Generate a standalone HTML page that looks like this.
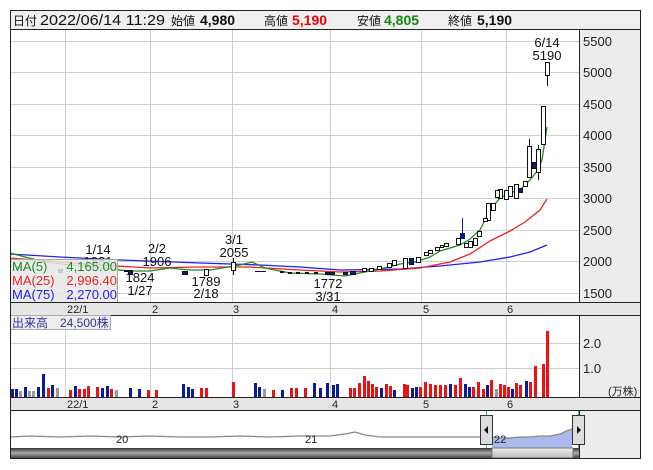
<!DOCTYPE html>
<html><head><meta charset="utf-8"><style>
html,body{margin:0;padding:0;background:#fff;width:653px;height:470px;overflow:hidden}
svg{display:block;font-family:"Liberation Sans","Noto Sans CJK JP",sans-serif}
</style></head><body>
<svg width="653" height="470" viewBox="0 0 653 470" xmlns="http://www.w3.org/2000/svg">
<rect x="10.5" y="10.5" width="630" height="448" fill="#fff" stroke="#222"/>
<rect x="11" y="11" width="629" height="18" fill="#efefef"/>
<line x1="10" y1="29.5" x2="641" y2="29.5" stroke="#222"/>
<g font-size="13" fill="#111">
<text x="13" y="25" font-size="12">日付</text>
<text x="40" y="25" font-size="15" textLength="125" lengthAdjust="spacingAndGlyphs">2022/06/14 11:29</text>
<text x="171" y="25" font-size="12">始値</text>
<text x="200" y="25" font-weight="bold" font-size="14">4,980</text>
<text x="264" y="25" font-size="12">高値</text>
<text x="292" y="25" font-weight="bold" font-size="14" fill="#ee0000">5,190</text>
<text x="357" y="25" font-size="12">安値</text>
<text x="384" y="25" font-weight="bold" font-size="14" fill="#118811">4,805</text>
<text x="448" y="25" font-size="12">終値</text>
<text x="477" y="25" font-weight="bold" font-size="14">5,190</text>
</g>
<rect x="579" y="30" width="61" height="272" fill="#ececec"/>
<rect x="579" y="315" width="61" height="82" fill="#ececec"/>
<line x1="579.5" y1="30" x2="579.5" y2="397" stroke="#222"/>
<g stroke="#cfcfcf" stroke-width="1">
<line x1="11" y1="41.5" x2="579" y2="41.5"/><line x1="11" y1="72.5" x2="579" y2="72.5"/>
<line x1="11" y1="104.5" x2="579" y2="104.5"/><line x1="11" y1="135.5" x2="579" y2="135.5"/>
<line x1="11" y1="167.5" x2="579" y2="167.5"/><line x1="11" y1="198.5" x2="579" y2="198.5"/>
<line x1="11" y1="230.5" x2="579" y2="230.5"/><line x1="11" y1="261.5" x2="579" y2="261.5"/>
<line x1="11" y1="293.5" x2="579" y2="293.5"/>
<line x1="65.5" y1="30" x2="65.5" y2="302"/><line x1="150.5" y1="30" x2="150.5" y2="302"/>
<line x1="232.5" y1="30" x2="232.5" y2="302"/><line x1="330.5" y1="30" x2="330.5" y2="302"/>
<line x1="421.5" y1="30" x2="421.5" y2="302"/><line x1="506.5" y1="30" x2="506.5" y2="302"/>
<line x1="11" y1="343.5" x2="579" y2="343.5"/><line x1="11" y1="368.5" x2="579" y2="368.5"/>
<line x1="65.5" y1="315" x2="65.5" y2="397"/><line x1="150.5" y1="315" x2="150.5" y2="397"/>
<line x1="232.5" y1="315" x2="232.5" y2="397"/><line x1="330.5" y1="315" x2="330.5" y2="397"/>
<line x1="421.5" y1="315" x2="421.5" y2="397"/><line x1="506.5" y1="315" x2="506.5" y2="397"/>
</g>
<g font-size="13" fill="#222">
<text x="583" y="46">5500</text><text x="583" y="77">5000</text><text x="583" y="109">4500</text>
<text x="583" y="140">4000</text><text x="583" y="172">3500</text><text x="583" y="203">3000</text>
<text x="583" y="235">2500</text><text x="583" y="266">2000</text><text x="583" y="298">1500</text>
<text x="583" y="348">2.0</text><text x="583" y="373">1.0</text>
<text x="608" y="395" font-size="11">(万株)</text>
</g>
<polyline fill="none" stroke="#2222ee" stroke-width="1.3" points="10,254 60,257 120,260 200,263 260,265 300,267 340,270 400,269 440,266 480,262 510,257 530,252 547,245"/>
<polyline fill="none" stroke="#ee2222" stroke-width="1.3" points="10,258 60,262 100,265 150,268 200,267 250,267 300,270 340,272 380,271 420,268 450,262 470,254 490,241 510,231 525,222 540,210 547,199"/>
<polyline fill="none" stroke="#228822" stroke-width="1.3" points="10,253 25,257 45,262 70,265 100,268 130,271 150,271 170,268 190,270 210,270 240,265 252,262 265,268 290,273 320,274 345,276 360,273 380,269 400,264 415,262 430,257 440,251 460,245 470,239 480,230 490,210 500,198 510,193 520,190 530,180 538,170 542,160 547,127"/>
<g stroke="#111" stroke-width="1" fill="#fff">
<line x1="547.5" y1="62" x2="547.5" y2="86"/><rect x="545.5" y="62.5" width="4" height="13"/>
<rect x="541.5" y="106.5" width="4" height="38"/>
<line x1="538.5" y1="145" x2="538.5" y2="180"/><rect x="536.5" y="149.5" width="4" height="23"/>
<rect x="532.5" y="162.5" width="4" height="6" fill="#0a1a99"/>
<line x1="529.5" y1="139" x2="529.5" y2="178"/><rect x="527.5" y="146.5" width="4" height="31"/>
<rect x="523.5" y="181.5" width="4" height="5"/>
<rect x="518.5" y="188.5" width="4" height="4" fill="#0a1a99"/>
<rect x="514.5" y="184.5" width="4" height="14"/>
<rect x="508.5" y="186.5" width="4" height="10"/>
<rect x="504.5" y="190.5" width="4" height="9"/>
<rect x="498.5" y="189.5" width="4" height="9"/>
<rect x="495.5" y="190.5" width="4" height="7"/>
<rect x="491.5" y="203.5" width="4" height="7"/>
<rect x="486.5" y="203.5" width="4" height="17"/>
<rect x="483.5" y="218.5" width="4" height="3"/>
<rect x="477.5" y="231.5" width="4" height="5"/>
<rect x="473.5" y="238.5" width="4" height="7"/>
<rect x="468.5" y="241.5" width="4" height="6"/>
<rect x="464.5" y="243.5" width="4" height="4"/>
<line x1="462.5" y1="218" x2="462.5" y2="238" stroke="#0a1a99"/><rect x="460.5" y="233.5" width="4" height="5" fill="#0a1a99" stroke="#0a1a99"/>
<rect x="456.5" y="238.5" width="4" height="6"/>
<rect x="444.5" y="243.5" width="4" height="3"/>
<rect x="440.5" y="245.5" width="3" height="2"/>
<rect x="435.5" y="247.5" width="4" height="3"/>
<rect x="428.5" y="250.5" width="4" height="3"/>
<rect x="424.5" y="252.5" width="4" height="3"/>
<rect x="416.5" y="257.5" width="4" height="5"/>
<rect x="409.5" y="258.5" width="4" height="6" fill="#0a1a99"/>
<rect x="403.5" y="258.5" width="4" height="10"/>
<rect x="392.5" y="260.5" width="4" height="5"/>
<rect x="387.5" y="263.5" width="4" height="4"/>
<rect x="377.5" y="266.5" width="4" height="3"/>
<rect x="369.5" y="268.5" width="4" height="3"/>
<rect x="362.5" y="268.5" width="4" height="3"/>
<rect x="350.5" y="271.5" width="5" height="3" fill="#0a1a99"/>
<rect x="343.5" y="272.5" width="4" height="2" fill="#0a1a99"/>
<rect x="330.5" y="272.5" width="4" height="2" fill="#0a1a99"/>
<rect x="325.5" y="272.5" width="4" height="2" fill="#0a1a99"/>
<rect x="314.5" y="272.5" width="3" height="1" fill="#111"/>
<rect x="305.5" y="272.5" width="3" height="1" fill="#111"/>
<rect x="296.5" y="272.5" width="3" height="1" fill="#111"/>
<rect x="288.5" y="272.5" width="3" height="1" fill="#111"/>
<rect x="280.5" y="271.5" width="3" height="1" fill="#111"/>
<line x1="255" y1="271.5" x2="266" y2="271.5"/>
<line x1="233.5" y1="258" x2="233.5" y2="275"/><rect x="231.5" y="262.5" width="4" height="8"/>
<rect x="204.5" y="269.5" width="4" height="6"/>
<rect x="182.5" y="271.5" width="5" height="3" fill="#0a1a99"/>
<rect x="128.5" y="270.5" width="4" height="4" fill="#0a1a99"/>
<rect x="124.5" y="270.5" width="3" height="1" fill="#111"/>
<rect x="58.5" y="269.5" width="4" height="3" fill="#0a1a99"/>
<rect x="16.5" y="266.5" width="4" height="2" fill="#111"/>
</g>
<g font-size="13" fill="#111" text-anchor="middle">
<text x="547" y="47">6/14</text><text x="547" y="60">5190</text>
<text x="98" y="254">1/14</text><text x="98" y="266">1881</text>
<text x="157" y="253">2/2</text><text x="157" y="266">1906</text>
<text x="234" y="244">3/1</text><text x="234" y="257">2055</text>
<text x="140" y="282">1824</text><text x="140" y="295">1/27</text>
<text x="206" y="286">1789</text><text x="206" y="298">2/18</text>
<text x="328" y="288">1772</text><text x="328" y="301">3/31</text>
</g>
<rect x="10.5" y="259.5" width="107" height="43" fill="rgba(232,232,232,0.85)" stroke="#aaa"/>
<g font-size="13">
<text x="12" y="271" fill="#228822">MA(5)</text><text x="117" y="271" fill="#228822" text-anchor="end">4,165.00</text>
<text x="12" y="285" fill="#ee2222">MA(25)</text><text x="117" y="285" fill="#ee2222" text-anchor="end">2,996.40</text>
<text x="12" y="299" fill="#2222ee">MA(75)</text><text x="117" y="299" fill="#2222ee" text-anchor="end">2,270.00</text>
</g>
<rect x="11" y="302" width="629" height="13" fill="#e6e6e6"/>
<line x1="10" y1="302.5" x2="641" y2="302.5" stroke="#222"/>
<line x1="10" y1="315.5" x2="641" y2="315.5" stroke="#222"/>
<rect x="11" y="397" width="629" height="13" fill="#e6e6e6"/>
<line x1="10" y1="397.5" x2="641" y2="397.5" stroke="#222"/>
<line x1="10" y1="410.5" x2="641" y2="410.5" stroke="#222"/>
<g font-size="11" fill="#222">
<text x="67" y="313">22/1</text><text x="152" y="313">2</text><text x="233" y="313">3</text><text x="332" y="313">4</text><text x="423" y="313">5</text><text x="507" y="313">6</text>
<text x="67" y="408">22/1</text><text x="152" y="408">2</text><text x="233" y="408">3</text><text x="332" y="408">4</text><text x="423" y="408">5</text><text x="507" y="408">6</text>
</g>
<rect x="10.5" y="315.5" width="100" height="14" fill="#eeeeee" stroke="#aaa"/>
<text x="12" y="327" font-size="12" fill="#333399">出来高　24,500株</text>
<g>
<g fill="#0a1a99">
<rect x="11" y="389" width="3" height="8"/><rect x="15" y="389" width="3" height="8"/><rect x="24" y="387" width="3" height="10"/><rect x="37" y="387" width="3" height="10"/><rect x="42" y="374" width="3" height="23"/><rect x="51" y="385" width="3" height="12"/><rect x="74" y="386" width="3" height="11"/><rect x="101" y="388" width="3" height="9"/><rect x="106" y="386" width="3" height="11"/><rect x="129" y="388" width="3" height="9"/><rect x="138" y="389" width="3" height="8"/><rect x="182" y="384" width="3" height="13"/><rect x="187" y="387" width="3" height="10"/><rect x="191" y="389" width="3" height="8"/><rect x="254" y="383" width="3" height="14"/><rect x="258" y="387" width="3" height="10"/><rect x="281" y="390" width="3" height="7"/><rect x="313" y="383" width="3" height="14"/><rect x="319" y="388" width="3" height="9"/><rect x="326" y="383" width="3" height="14"/><rect x="332" y="385" width="3" height="12"/><rect x="336" y="384" width="3" height="13"/><rect x="380" y="388" width="3" height="9"/><rect x="393" y="390" width="3" height="7"/><rect x="411" y="388" width="3" height="9"/><rect x="415" y="387" width="3" height="10"/><rect x="449" y="384" width="3" height="13"/><rect x="464" y="384" width="3" height="13"/><rect x="468" y="387" width="3" height="10"/><rect x="486" y="385" width="3" height="12"/><rect x="511" y="389" width="3" height="8"/><rect x="525" y="381" width="3" height="16"/>
</g>
<g fill="#999">
<rect x="19" y="391" width="3" height="6"/><rect x="28" y="391" width="3" height="6"/><rect x="32" y="391" width="3" height="6"/><rect x="56" y="388" width="3" height="9"/><rect x="115" y="390" width="3" height="7"/><rect x="263" y="389" width="3" height="8"/><rect x="495" y="389" width="3" height="8"/>
</g>
<g fill="#ee1111">
<rect x="47" y="388" width="3" height="9"/><rect x="69" y="390" width="3" height="7"/><rect x="78" y="389" width="3" height="8"/><rect x="83" y="389" width="3" height="8"/><rect x="87" y="386" width="3" height="11"/><rect x="96" y="387" width="3" height="10"/><rect x="110" y="389" width="3" height="8"/><rect x="147" y="390" width="3" height="7"/><rect x="155" y="390" width="3" height="7"/><rect x="200" y="388" width="3" height="9"/><rect x="205" y="388" width="3" height="9"/><rect x="232" y="382" width="3" height="15"/><rect x="272" y="390" width="3" height="7"/><rect x="290" y="388" width="3" height="9"/><rect x="295" y="388" width="3" height="9"/><rect x="304" y="388" width="3" height="9"/><rect x="349" y="388" width="3" height="9"/><rect x="353" y="388" width="3" height="9"/><rect x="358" y="383" width="3" height="14"/><rect x="363" y="376" width="3" height="21"/><rect x="367" y="381" width="3" height="16"/><rect x="371" y="384" width="3" height="13"/><rect x="375" y="387" width="3" height="10"/><rect x="385" y="384" width="3" height="13"/><rect x="389" y="386" width="3" height="11"/><rect x="403" y="384" width="3" height="13"/><rect x="406" y="385" width="3" height="12"/><rect x="419" y="387" width="3" height="10"/><rect x="424" y="382" width="3" height="15"/><rect x="429" y="384" width="3" height="13"/><rect x="434" y="385" width="3" height="12"/><rect x="439" y="385" width="3" height="12"/><rect x="444" y="385" width="3" height="12"/><rect x="454" y="385" width="3" height="12"/><rect x="459" y="378" width="3" height="19"/><rect x="472" y="387" width="3" height="10"/><rect x="477" y="382" width="3" height="15"/><rect x="482" y="389" width="3" height="8"/><rect x="490" y="380" width="3" height="17"/><rect x="499" y="384" width="3" height="13"/><rect x="503" y="385" width="3" height="12"/><rect x="507" y="387" width="3" height="10"/><rect x="515" y="383" width="3" height="14"/><rect x="519" y="385" width="3" height="12"/><rect x="529" y="382" width="3" height="15"/><rect x="534" y="366" width="3" height="31"/><rect x="542" y="364" width="3" height="33"/><rect x="546" y="331" width="3" height="66"/>
</g>
</g>
<rect x="579" y="411" width="61" height="47" fill="#ececec"/>
<line x1="579.5" y1="410" x2="579.5" y2="458" stroke="#222"/>
<polygon fill="#aab8ee" points="492,437 500,438 510,438 520,437 530,437 540,436 550,436 560,434 566,431 572,429 572,448 492,448"/>
<polyline fill="none" stroke="#888" stroke-width="1.2" points="11,437 30,436 60,437 90,436 120,437 150,436 180,437 210,437 240,436 270,437 300,436 330,436 345,434 355,432 365,435 380,437 420,437 460,437 492,437 500,438 510,438 520,437 530,437 540,436 550,436 560,434 566,431 572,429"/>
<line x1="486.5" y1="411" x2="486.5" y2="458" stroke="#33aadd"/>
<line x1="578.5" y1="411" x2="578.5" y2="458" stroke="#33aadd"/>
<text x="116" y="443" font-size="11" fill="#222">20</text>
<text x="305" y="443" font-size="11" fill="#222">21</text>
<text x="494" y="443" font-size="11" fill="#222">22</text>
<defs><linearGradient id="sb" x1="0" y1="0" x2="0" y2="1"><stop offset="0" stop-color="#333"/><stop offset="0.5" stop-color="#aaa"/><stop offset="1" stop-color="#444"/></linearGradient>
<linearGradient id="th" x1="0" y1="0" x2="0" y2="1"><stop offset="0" stop-color="#eee"/><stop offset="1" stop-color="#bbb"/></linearGradient></defs>
<rect x="11" y="448" width="568" height="10" fill="url(#sb)"/>
<rect x="492" y="448" width="81" height="10" fill="url(#th)" stroke="#777"/>
<rect x="480.5" y="415.5" width="12" height="29" fill="#ddd" stroke="#333"/>
<polygon points="484,430 488,426 488,434" fill="#111"/>
<rect x="572.5" y="415.5" width="12" height="29" fill="#ddd" stroke="#333"/>
<polygon points="581,430 577,426 577,434" fill="#111"/>
<rect x="10.5" y="10.5" width="630" height="448" fill="none" stroke="#222"/>
</svg>
</body></html>
